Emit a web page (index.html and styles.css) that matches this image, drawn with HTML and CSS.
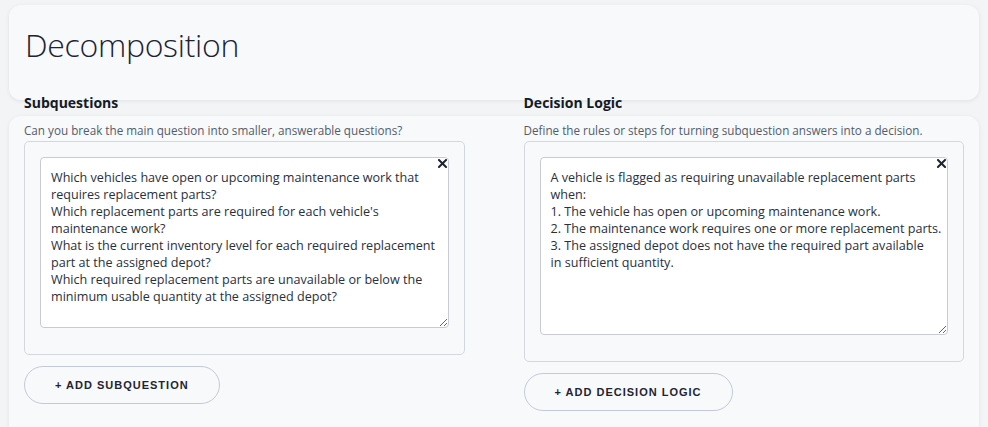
FILE: index.html
```html
<!DOCTYPE html>
<html lang="en">
<head>
<meta charset="utf-8">
<title>Decomposition</title>
<link rel="stylesheet" href="styles.css">
</head>
<body>
<div class="page">
  <header class="title-card">
    <h1 class="title">Decomposition</h1>
  </header>

  <div class="col-headings">
    <h2 class="col-heading">Subquestions</h2>
    <h2 class="col-heading">Decision Logic</h2>
  </div>

  <section class="panel">
    <div class="columns">
      <div class="col">
        <p class="desc">Can you break the main question into smaller, answerable questions?</p>
        <div class="box">
          <div class="field">
            <textarea class="entry entry-sub" wrap="off">Which vehicles have open or upcoming maintenance work that
requires replacement parts?
Which replacement parts are required for each vehicle's
maintenance work?
What is the current inventory level for each required replacement
part at the assigned depot?
Which required replacement parts are unavailable or below the
minimum usable quantity at the assigned depot?</textarea>
            <button class="remove" type="button" aria-label="Remove">
              <svg width="9" height="9" viewBox="0 0 9 9"><path d="M1 1L8 8M8 1L1 8" stroke="#1f2530" stroke-width="2" stroke-linecap="square" fill="none"/></svg>
            </button>
          </div>
        </div>
        <button class="add" type="button">+ ADD SUBQUESTION</button>
      </div>

      <div class="col">
        <p class="desc">Define the rules or steps for turning subquestion answers into a decision.</p>
        <div class="box">
          <div class="field">
            <textarea class="entry entry-logic" wrap="off">A vehicle is flagged as requiring unavailable replacement parts
when:
1. The vehicle has open or upcoming maintenance work.
2. The maintenance work requires one or more replacement parts.
3. The assigned depot does not have the required part available
in sufficient quantity.</textarea>
            <button class="remove" type="button" aria-label="Remove">
              <svg width="9" height="9" viewBox="0 0 9 9"><path d="M1 1L8 8M8 1L1 8" stroke="#1f2530" stroke-width="2" stroke-linecap="square" fill="none"/></svg>
            </button>
          </div>
        </div>
        <button class="add" type="button">+ ADD DECISION LOGIC</button>
      </div>
    </div>
  </section>
</div>
</body>
</html>
```

FILE: styles.css
```css
html, body {
  margin: 0;
  padding: 0;
  height: 427px;
  overflow: hidden;
  background: #f3f4f6;
  font-family: "Open Sans", "Noto Sans", sans-serif;
  color: #1f2530;
}

.page {
  padding: 5px 9px 0;
}

.title-card {
  height: 95px;
  box-sizing: border-box;
  padding: 20px 16px 0;
  background: #f8f9fb;
  border-radius: 12px;
  box-shadow: 0 1px 4px rgba(30, 40, 60, 0.09);
}

.title {
  margin: 0;
  font-size: 32px;
  line-height: 40px;
  font-weight: 300;
  letter-spacing: -0.3px;
  color: #1c2433;
}

.col-headings {
  position: relative;
  display: grid;
  grid-template-columns: 1fr 1fr;
  column-gap: 59px;
  padding: 0 15px;
  margin: -6px 0 4px;
}

.col-heading {
  margin: 0;
  font-size: 14px;
  line-height: 18px;
  font-weight: 700;
  color: #141a24;
}

.panel {
  background: #f8f9fb;
  border-radius: 12px 12px 0 0;
  box-shadow: 0 1px 4px rgba(30, 40, 60, 0.08);
  padding: 6px 15px 0;
  height: 311px;
  box-sizing: border-box;
}

.columns {
  display: grid;
  grid-template-columns: 1fr 1fr;
  column-gap: 59px;
}

.col {
  display: flex;
  flex-direction: column;
  align-items: flex-start;
}

.desc {
  margin: 0 0 3px;
  font-size: 11.7px;
  line-height: 16px;
  color: #535c6a;
}

.box {
  align-self: stretch;
  border: 1px solid #d4d8de;
  border-radius: 5px;
  padding: 15px 15px 26px;
}

.field {
  position: relative;
}

.entry {
  display: block;
  width: 100%;
  box-sizing: border-box;
  margin: 0;
  padding: 11px 10px;
  border: 1px solid #c8ccd2;
  border-radius: 4px;
  background: #fff;
  font-family: "Open Sans", "Noto Sans", sans-serif;
  font-size: 12.6px;
  line-height: 17px;
  color: #29303c;
  white-space: pre;
  overflow: hidden;
  resize: vertical;
  outline: none;
}

.entry-sub {
  height: 171px;
}

.entry-logic {
  height: 178px;
}

.remove {
  position: absolute;
  top: 1px;
  right: 1px;
  width: 11px;
  height: 11px;
  padding: 1px;
  border: 0;
  background: transparent;
  display: flex;
  align-items: center;
  justify-content: center;
  cursor: pointer;
}

.add {
  margin-top: 11px;
  height: 38px;
  padding: 0 30px;
  border: 1px solid #c3cad6;
  border-radius: 19px;
  background: transparent;
  font-family: "Liberation Sans", Arial, sans-serif;
  font-size: 11px;
  font-weight: 700;
  letter-spacing: 1px;
  color: #1f2530;
  cursor: pointer;
}
```
